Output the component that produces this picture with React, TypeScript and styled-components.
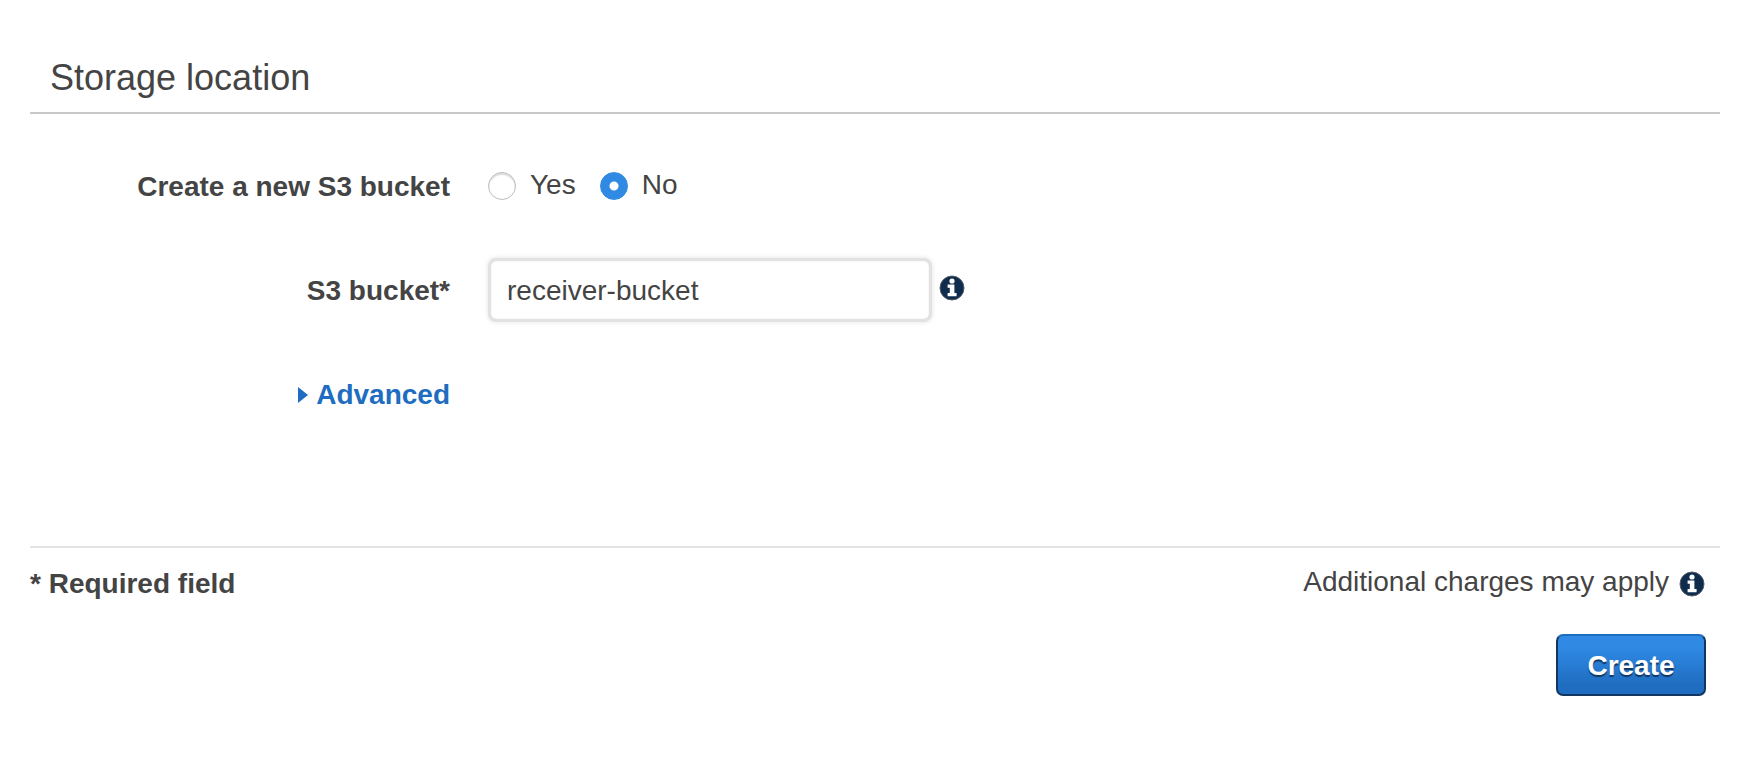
import React, { useState } from "react";
import styled, { createGlobalStyle } from "styled-components";

const GlobalStyle = createGlobalStyle`
  *, *::before, *::after { box-sizing: border-box; }
  body {
    margin: 0;
    background: #ffffff;
    color: #444444;
    font-family: "Liberation Sans", Arial, sans-serif;
    font-size: 28px;
    line-height: 32px;
  }
  input, button { font: inherit; color: inherit; }
`;

const Page = styled.main`
  padding: 57px 34px 40px 30px;
`;

const SectionTitle = styled.h1`
  margin: 0;
  padding: 0 20px 13px;
  border-bottom: 2px solid #c8c8c8;
  font-size: 36px;
  line-height: 42px;
  font-weight: 400;
`;

const Fields = styled.div`
  display: flex;
  flex-direction: column;
  gap: 40px;
  padding: 40px 0 120px;
`;

const FieldRow = styled.div`
  display: grid;
  grid-template-columns: 420px 1fr;
  column-gap: 38px;
  align-items: center;
  min-height: 64px;
`;

const LabelCell = styled.div`
  padding-top: 1px;
  text-align: right;
  font-weight: 700;
`;

const Control = styled.div`
  display: flex;
  align-items: center;
`;

const RadioGroup = styled(Control)`
  gap: 24px;
  padding-bottom: 3px;
`;

const RadioLabel = styled.label`
  display: flex;
  align-items: center;
  gap: 14px;
  cursor: pointer;
`;

const Radio = styled.input`
  appearance: none;
  flex: none;
  width: 28px;
  height: 28px;
  margin: 3px 0 0;
  border: 1px solid #bcbcbc;
  border-radius: 50%;
  background: #ffffff;
  box-shadow: inset 0 2px 1px #dedede;

  &:checked {
    border-color: #3089e3;
    background: radial-gradient(circle, #ffffff 4px, #3089e3 5px);
    box-shadow: none;
  }
`;

const TextInput = styled.input`
  width: 444px;
  height: 64px;
  padding: 1px 16px 0;
  border: 3px solid #e2e2e2;
  border-radius: 8px;
  outline: none;
  background: #ffffff;
  box-shadow: 0 0 5px #e2e2e2, inset 0 0 1px #c0c0c0;
`;

const InfoButton = styled.button`
  display: flex;
  margin: 0 0 4px 7px;
  padding: 0;
  border: 0;
  background: none;
  cursor: pointer;
`;

const AdvancedButton = styled.button`
  display: inline-flex;
  align-items: center;
  gap: 8px;
  padding: 0;
  border: 0;
  background: none;
  color: #1e6dc0;
  font-weight: 700;
  cursor: pointer;
`;

const Footer = styled.footer`
  display: flex;
  justify-content: space-between;
  padding: 18px 14px 0 0;
  border-top: 2px solid #e4e4e4;
`;

const RequiredNote = styled.strong`
  padding-top: 2px;
`;

const Actions = styled.div`
  display: flex;
  flex-direction: column;
  align-items: flex-end;
  gap: 36px;
`;

const Charges = styled.div`
  display: flex;
  align-items: center;
  padding-right: 1px;

  ${InfoButton} { margin: 4px 0 0 10px; }
`;

const CreateButton = styled.button`
  width: 150px;
  height: 62px;
  padding: 2px 0 0;
  border: 2px solid #123660;
  border-top-color: #1e6dc0;
  border-radius: 7px;
  background: linear-gradient(#3089e3 20%, #1e6dc0 85%);
  color: #ffffff;
  font-weight: 700;
  text-shadow: 0 2px 1px #123660;
  cursor: pointer;
`;

const InfoIcon = () => (
  <svg width="26" height="26" viewBox="0 0 26 26" aria-hidden="true">
    <circle cx="13" cy="13" r="12" fill="#0f2c4d" stroke="#555d65" strokeWidth="1" />
    <circle cx="13" cy="6" r="2.6" fill="#ffffff" />
    <path d="M8.6 9.6h6.8v8.4h2.2v3.2H8.6V18h2.2v-5.2H8.6z" fill="#ffffff" />
  </svg>
);

export default function App() {
  const [newBucket, setNewBucket] = useState(false);
  const [bucket, setBucket] = useState("receiver-bucket");
  return (
    <>
      <GlobalStyle />
      <Page>
        <SectionTitle>Storage location</SectionTitle>
        <Fields>
          <FieldRow role="radiogroup" aria-labelledby="new-bucket">
            <LabelCell id="new-bucket">Create a new S3 bucket</LabelCell>
            <RadioGroup>
              <RadioLabel>
                <Radio type="radio" name="newBucket" checked={newBucket} onChange={() => setNewBucket(true)} />
                Yes
              </RadioLabel>
              <RadioLabel>
                <Radio type="radio" name="newBucket" checked={!newBucket} onChange={() => setNewBucket(false)} />
                No
              </RadioLabel>
            </RadioGroup>
          </FieldRow>
          <FieldRow>
            <LabelCell as="label" htmlFor="bucket">S3 bucket*</LabelCell>
            <Control>
              <TextInput id="bucket" type="text" value={bucket} onChange={(e) => setBucket(e.target.value)} />
              <InfoButton type="button" aria-label="About the S3 bucket"><InfoIcon /></InfoButton>
            </Control>
          </FieldRow>
          <FieldRow>
            <LabelCell>
              <AdvancedButton type="button">
                <svg width="10" height="16" viewBox="0 0 10 16" aria-hidden="true">
                  <path d="M0 0L10 8L0 16z" fill="currentColor" />
                </svg>
                Advanced
              </AdvancedButton>
            </LabelCell>
          </FieldRow>
        </Fields>
        <Footer>
          <RequiredNote>* Required field</RequiredNote>
          <Actions>
            <Charges>
              Additional charges may apply
              <InfoButton type="button" aria-label="About additional charges"><InfoIcon /></InfoButton>
            </Charges>
            <CreateButton type="submit">Create</CreateButton>
          </Actions>
        </Footer>
      </Page>
    </>
  );
}
